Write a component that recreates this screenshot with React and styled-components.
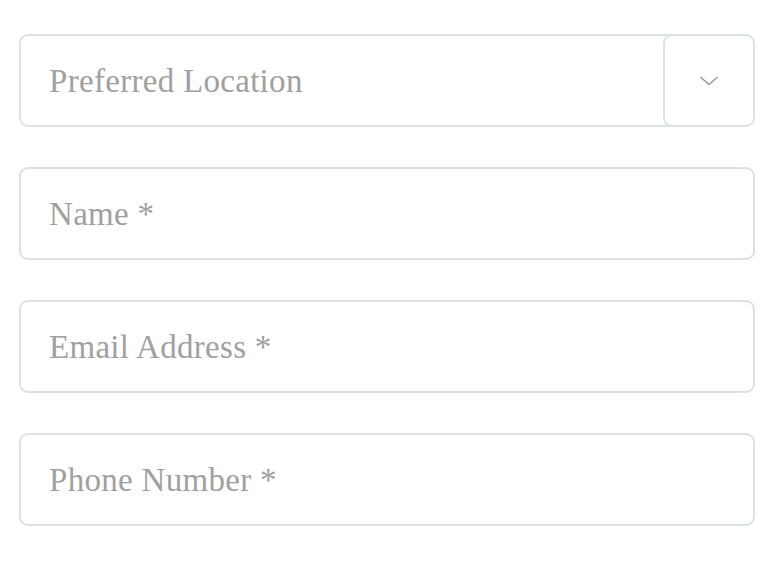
import React from "react";
import styled, { createGlobalStyle } from "styled-components";

const Global = createGlobalStyle`
  html, body { margin: 0; padding: 0; background: #ffffff; }
  * { box-sizing: border-box; }
`;

const Form = styled.form`
  display: flex;
  flex-direction: column;
  gap: 40px;
  padding: 34px 25px 0 19px;
  width: 780px;
`;

const Field = styled.div`
  position: relative;
  display: flex;
  align-items: stretch;
  height: 93px;
  border: 2px solid #dbe2e2;
  border-radius: 9px;
  background: #ffffff;
  overflow: hidden;
`;

const Input = styled.input`
  flex: 1;
  min-width: 0;
  border: none;
  outline: none;
  background: transparent;
  padding: 2px 0 0 28px;
  font-family: "Liberation Serif", "DejaVu Serif", serif;
  font-size: 33px;
  letter-spacing: 0.3px;
  color: #444;
  &::placeholder { color: #a0a0a0; opacity: 1; }
`;

const Placeholder = styled.span`
  flex: 1;
  display: flex;
  align-items: center;
  padding: 2px 0 0 28px;
  font-family: "Liberation Serif", "DejaVu Serif", serif;
  font-size: 33px;
  letter-spacing: 0.3px;
  color: #a0a0a0;
`;

const Toggle = styled.button`
  width: 92px;
  margin: -2px -2px -2px 0;
  border: 2px solid #dbe2e2;
  border-radius: 9px;
  background: #ffffff;
  display: flex;
  align-items: center;
  justify-content: center;
  padding: 0;
  cursor: pointer;
`;

const Chevron = () => (
  <svg width="18" height="10" viewBox="0 0 18 10" fill="none">
    <path d="M1 1.5 L9 8.5 L17 1.5" stroke="#9a9a9a" strokeWidth="1.6" strokeLinecap="round" strokeLinejoin="round" />
  </svg>
);

export default function App() {
  return (
    <>
      <Global />
      <Form>
        <Field>
          <Placeholder>Preferred Location</Placeholder>
          <Toggle type="button" aria-label="Open">
            <Chevron />
          </Toggle>
        </Field>
        <Field>
          <Input placeholder="Name *" />
        </Field>
        <Field>
          <Input placeholder="Email Address *" />
        </Field>
        <Field>
          <Input placeholder="Phone Number *" />
        </Field>
      </Form>
    </>
  );
}
